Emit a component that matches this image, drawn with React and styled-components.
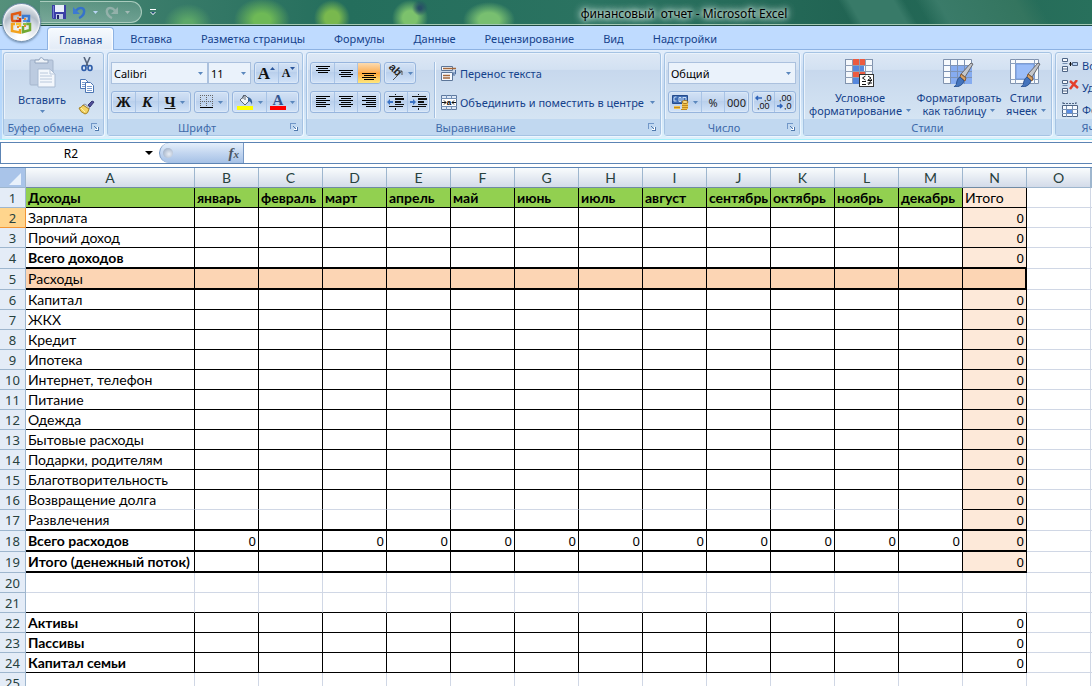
import styled, { createGlobalStyle, css } from 'styled-components'

const colors = {
  text: '#15428b',
  label: '#3e6aaa',
  line: '#8db2e3',
  caret: '#5a87bd',
  grid: '#d0d7e5',
  green: '#92d050',
  peach: '#fcd5b4',
  lightPeach: '#fde9d9',
}

const uiFont = `'Noto Sans', 'Open Sans', sans-serif`
const cellFont = `Lato, 'Open Sans', sans-serif`

const GlobalStyle = createGlobalStyle`
  * {
    box-sizing: border-box;
  }
  body {
    margin: 0;
    background: #fff;
    font-family: ${uiFont};
    font-size: 11px;
    color: ${colors.text};
  }
  button, input, select {
    font: inherit;
    color: inherit;
    margin: 0;
  }
  svg {
    display: block;
    flex-shrink: 0;
  }
`

const Window = styled.div`
  display: flex;
  flex-direction: column;
  height: 100vh;
  overflow: hidden;
  position: relative;
`

const TitleBar = styled.header`
  display: flex;
  height: 26px;
  flex-shrink: 0;
  border-bottom: 1px solid #1d4b42;
  box-shadow: inset 0 -1px 0 #a3c9b4;
  background:
    radial-gradient(ellipse 24px 20px at 188px 24px, #5da868 20%, transparent),
    radial-gradient(ellipse 28px 22px at 262px 20px, #6eb956 30%, transparent),
    radial-gradient(ellipse 18px 18px at 332px 18px, #79b84e 40%, transparent),
    radial-gradient(circle 8px at 420px 8px, #274f66 20%, transparent),
    radial-gradient(ellipse 18px 18px at 410px 18px, #7cc26c 40%, transparent),
    radial-gradient(ellipse 26px 18px at 489px 20px, #78bf70 40%, transparent),
    linear-gradient(60deg, transparent 77%, #387a68 78%, #387a68 82%, transparent 83%),
    linear-gradient(60deg, transparent 84%, #3a7b69 86%, #34755f 93%, transparent 95%),
    linear-gradient(90deg, #55907b 0%, #3a7c6a 14%, #246e5c 32%, #2b7361 55%, #216453 78%, #28705c 100%);
`

const QuickArea = styled.div`
  width: 276px;
  display: flex;
  align-items: center;
  gap: 8px;
  padding-left: 40px;
  padding-bottom: 1px;
`

const QuickBar = styled.div`
  display: flex;
  align-items: center;
  gap: 7px;
  height: 22px;
  width: 102px;
  padding-left: 12px;
  border: 1px solid #a9cbbd;
  border-left: 0;
  border-radius: 0 11px 11px 0;
  background: linear-gradient(#8bb3a555, #b7d3ca66);
`

const IconButton = styled.button`
  display: flex;
  align-items: center;
  justify-content: center;
  padding: 0;
  border: 0;
  background: none;
`

const Title = styled.h1`
  flex: 1;
  margin: 0;
  font-size: 12px;
  line-height: 28px;
  font-weight: 400;
  text-align: center;
  white-space: pre;
  color: #000;
  text-shadow: 0 0 4px #e4f3ec, 0 0 8px #e4f3ec, 0 0 10px #e4f3ec;
`

const OfficeButton = styled.button`
  position: absolute;
  top: 3px;
  left: 2px;
  width: 39px;
  height: 39px;
  padding: 0;
  display: flex;
  align-items: center;
  justify-content: center;
  border: 1px solid #7691ad;
  border-radius: 50%;
  background: radial-gradient(circle at 50% 90%, #fff 10%, #d9dfe6 45%, #b3bdc9 60%, #eef2f6 90%);
  box-shadow: 0 1px 2px #33557788, inset 0 0 2px 1px #fff;
`

const Tabs = styled.nav`
  display: flex;
  gap: 1px;
  height: 24px;
  flex-shrink: 0;
  padding: 1px 0 0 47px;
  background: #bfdbff;
  border-bottom: 1px solid ${colors.line};
`

const Tab = styled.button`
  height: 24px;
  padding: 0 ${(p) => (p.$active ? 11 : 14)}px;
  margin-right: ${(p) => (p.$active ? 1 : 0)}px;
  border: ${(p) => (p.$active ? `1px solid ${colors.line}` : '0')};
  border-bottom: 0;
  border-radius: 4px 4px 0 0;
  background: ${(p) => (p.$active ? 'linear-gradient(#f6fafe, #e1eaf6)' : 'none')};
  box-shadow: ${(p) => (p.$active ? 'inset 0 0 2px 1px #fff' : 'none')};
  line-height: 22px;
  white-space: nowrap;
`

const Ribbon = styled.div`
  display: flex;
  gap: 3px;
  height: 90px;
  flex-shrink: 0;
  padding: 2px 0 3px 3px;
  overflow: hidden;
  border-bottom: 1px solid #9ff0fb;
  background: linear-gradient(#e3eefb, #cfe0f5 20%, #c7dbf3 45%, #dcf0fb);
  box-shadow: inset 2px 0 0 #b7d8fb;
`

const Group = styled.section`
  display: flex;
  flex-direction: column;
  flex-shrink: 0;
  width: ${(p) => p.$width}px;
  border: 1px solid #a5c3e3;
  border-radius: 3px;
  box-shadow: 1px 1px 0 #eef6ff, inset 1px 1px 0 #eaf2fb;
  background: linear-gradient(#dde8f5, #d3e1f2 20%, #c7d8ed 21%, #d9e8f5 100%);
`

const GroupBody = styled.div`
  flex: 1;
  min-height: 0;
  display: flex;
  padding: ${(p) => p.$pad || '9px 3px 0'};
  gap: ${(p) => p.$gap || 0}px;
`

const GroupLabel = styled.div`
  position: relative;
  height: 16px;
  flex-shrink: 0;
  line-height: 17px;
  padding-right: ${(p) => (p.$launcher ? 16 : 0)}px;
  text-align: center;
  white-space: nowrap;
  color: ${colors.label};
  background: #c1d8f0;
`

const Launcher = styled(IconButton)`
  position: absolute;
  top: 3px;
  right: 4px;
`

const Stack = styled.div`
  display: flex;
  flex-direction: column;
  gap: ${(p) => p.$gap || 7}px;
`

const Row = styled.div`
  display: flex;
  gap: ${(p) => p.$gap ?? 3}px;
`

const ButtonSet = styled.div`
  display: flex;
  height: 22px;
  border: 1px solid #97b5dd;
  border-radius: 3px;
  overflow: hidden;
  background: linear-gradient(#d3e2f5, #c1d5ef 45%, #b9cfec 46%, #d2e3f8);
  box-shadow: inset 0 0 0 1px #dbe8f7;
`

const Tool = styled.button`
  display: flex;
  align-items: center;
  justify-content: center;
  gap: ${(p) => p.$gap ?? 4}px;
  width: ${(p) => p.$width || 23}px;
  padding: 0;
  border: 0;
  border-left: 1px solid #a9c4e6;
  background: none;
  color: #111;
  white-space: nowrap;
  &:first-child {
    border-left: 0;
  }
  ${(p) =>
    p.$active &&
    css`
      background: linear-gradient(#fbdbb0, #fdb159 45%, #fda63c 50%, #ffe87c);
    `}
`

const Glyph = styled.span`
  font-family: 'Liberation Serif', serif;
  font-size: ${(p) => p.$size || 15}px;
  font-weight: 700;
  line-height: 15px;
  font-style: ${(p) => (p.$italic ? 'italic' : 'normal')};
  text-decoration: ${(p) => (p.$underline ? 'underline' : 'none')};
`

const SizeMark = styled.span`
  align-self: flex-start;
  padding-top: 4px;
`

const Digits = styled.span`
  font-size: 11px;
  color: #222;
`

const SelectBox = styled.div`
  display: flex;
  align-items: center;
  width: ${(p) => p.$width}px;
  height: 22px;
  padding-right: 4px;
  border: 1px solid #abc1de;
  background: #eaf2fb;
`

const Select = styled.select`
  flex: 1;
  min-width: 0;
  height: 20px;
  padding: 0 0 0 2px;
  border: 0;
  appearance: none;
  background: none;
  color: #000;
`

const BigButton = styled.button`
  display: flex;
  flex-direction: column;
  align-items: center;
  width: ${(p) => p.$width}px;
  padding: 0;
  border: 0;
  background: none;
  line-height: 13px;
  white-space: nowrap;
  > svg:first-child {
    margin-bottom: 4px;
  }
`

const BigCaption = styled.span`
  display: flex;
  align-items: center;
  gap: 4px;
`

const CaptionCaret = styled.span`
  padding-top: 4px;
`

const TextButton = styled.button`
  display: flex;
  align-items: center;
  gap: 3px;
  height: ${(p) => p.$height || 22}px;
  padding: 0;
  border: 0;
  background: none;
  white-space: nowrap;
`

const ButtonText = styled.span`
  padding-right: 3px;
`

const Divider = styled.div`
  width: 2px;
  height: 56px;
  margin: 0 5px 0 4px;
  background: #a3bfe0;
  border-right: 1px solid #f1f7fd;
`

const FormulaBar = styled.div`
  display: flex;
  flex-shrink: 0;
  height: 22px;
  margin-top: 2px;
  border-top: 1px solid #5c84b4;
  border-bottom: 1px solid #5c84b4;
  background: #fff;
`

const NameBox = styled.div`
  display: flex;
  align-items: center;
  width: 159px;
  padding-right: 6px;
  border-left: 1px solid #5c84b4;
`

const NameInput = styled.input`
  flex: 1;
  min-width: 0;
  padding: 0 4px 0 0;
  border: 0;
  outline: 0;
  font-size: 12px;
  text-align: center;
  color: #000;
`

const FunctionBox = styled.div`
  display: flex;
  align-items: center;
  justify-content: space-between;
  width: 85px;
  padding: 0 4px 0 3px;
  border: 1px solid #7798c4;
  border-width: 0 1px;
  border-radius: 10px 0 0 10px;
  background: linear-gradient(#e4effb, #c3d6f0 50%, #a5c1e6);
`

const Knob = styled.span`
  width: 10px;
  height: 10px;
  border-radius: 50%;
  background: radial-gradient(circle at 60% 60%, #e9eef5, #8fa2bd);
`

const Fx = styled.span`
  font: italic bold 15px 'Liberation Serif', serif;
  color: #4c5663;
  small {
    font-size: 11px;
  }
`

const FormulaInput = styled.input`
  flex: 1;
  border: 0;
  outline: 0;
`

const SheetWrap = styled.main`
  flex: 1;
  min-height: 0;
  overflow: hidden;
  margin-top: 3px;
  border-top: 1px solid #5c84b4;
  background: #fff;
`

const Sheet = styled.table`
  width: 100%;
  table-layout: fixed;
  border-collapse: separate;
  border-spacing: 0;
  font-family: ${cellFont};
  font-size: 14px;
  line-height: 16px;
  color: #000;
`

const ColHead = styled.th`
  height: 20px;
  padding: 0;
  font-weight: 400;
  color: #27413e;
  border-right: 1px solid #9eb6ce;
  border-bottom: 1px solid ${(p) => (p.$overTable ? '#6f8aa3' : '#9eb6ce')};
  background: linear-gradient(#f9fcfd, #d3dbe9);
`

const Corner = styled.th`
  padding: 0;
  border-right: 1px solid #9eb6ce;
  border-bottom: 1px solid #9eb6ce;
  background: #a9c4e9;
  svg {
    margin: 3px 3px 0 auto;
  }
`

const RowHead = styled.th`
  height: ${(p) => p.$height}px;
  padding: 0;
  font-family: ${uiFont};
  font-size: 13px;
  font-weight: 400;
  color: #27413e;
  border-right: 1px solid ${(p) => (p.$active ? '#f29536' : '#9eb6ce')};
  border-bottom: 1px solid ${(p) => (p.$active ? '#f29536' : '#9eb6ce')};
  background: ${(p) => (p.$active ? '#ffd58d' : '#e4ecf7')};
`

const Cell = styled.td`
  padding: 0 ${(p) => (p.$number ? 2 : 0)}px 0 2px;
  overflow: hidden;
  white-space: nowrap;
  text-align: ${(p) => (p.$number ? 'right' : 'left')};
  font-weight: ${(p) => (p.$bold ? 700 : 400)};
  background: ${(p) => p.$fill || '#fff'};
  border-right: ${(p) => p.$right}px solid ${(p) => (p.$dark ? '#000' : colors.grid)};
  border-bottom: ${(p) => p.$bottom}px solid ${(p) => (p.$darkBottom ? '#000' : colors.grid)};
  ${(p) =>
    p.$number &&
    css`
      font-family: ${uiFont};
      font-size: 13px;
    `}
`

const Caret = ({ color = colors.caret, size = 5 }) => (
  <svg width={size} height={size === 5 ? 3 : 4} viewBox="0 0 5 3" preserveAspectRatio="none" aria-hidden="true">
    <path d="M0 0h5L2.5 3z" fill={color} />
  </svg>
)

const Lines = ({ rows, top = 0, align = 'left' }) => (
  <svg width="16" height="16" shapeRendering="crispEdges" aria-hidden="true">
    {rows.map((w, i) => {
      const x = align === 'left' ? 1 : align === 'right' ? 15 - w : 8 - w / 2
      return <rect key={i} x={x} y={top + i * 2} width={w} height="1" fill="#000" />
    })}
  </svg>
)

const IndentIcon = ({ flip }) => (
  <svg width="18" height="16" shapeRendering="crispEdges" aria-hidden="true">
    <path d="M2 2h14v1H2zM8 4h9v2H8zM8 7h6v2H8zM8 10h9v1H8zM2 12h14v1H2zM8 14h1v2H8zM8 0h1v1H8z" fill="#111" />
    <path
      d={flip ? 'M6 8L3 5v2H0v2h3v2z' : 'M0 8l3-3v2h3v2H3v2z'}
      fill="#3a72c4"
      shapeRendering="auto"
    />
  </svg>
)

const LauncherIcon = () => (
  <svg width="9" height="9" fill="none" shapeRendering="crispEdges" aria-hidden="true">
    <path d="M1.5 7V1.5H7" stroke="#7197c8" />
    <path d="M4.5 8.5h4v-4M4 4l3 3" stroke="#4f79ad" />
    <path d="M5 8V7h2V5h1v3z" fill="#fff" />
  </svg>
)

const OfficeLogo = () => (
  <svg width="25" height="25" viewBox="0 0 25 25" fill="none" strokeWidth="2.5" aria-hidden="true">
    <path d="M7 11H3.500Q3 11 3 8V4.500L11 2.500V6" stroke="#df5a12" />
    <path d="M7 11h4V8" stroke="#c83018" />
    <path d="M14 9V6h6v5h-3" stroke="#3a7ad0" />
    <path d="M6 14H3v7l8 1.500V19" stroke="#f3a21d" />
    <path d="M7 14h4v3" stroke="#fac22c" />
    <path d="M14 16v6l7-2v-6h-4" stroke="#72a932" />
    <path d="M8 8h2M15 9h2M8 17h2M15 16h2" stroke="#ea8c31" strokeWidth="2" />
    <path d="M14 11h4" stroke="#5b96df" strokeWidth="2" />
    <path d="M14 14h4" stroke="#8fbe4b" strokeWidth="2" />
  </svg>
)

const SaveIcon = () => (
  <svg width="14" height="14" aria-hidden="true">
    <path d="M0 0h14v14H1L0 13z" fill="#3a3fa6" />
    <path d="M3 0h9v7H3z" fill="#e9f0fa" />
    <path d="M4 9h7v5H4z" fill="#c2cde6" />
    <path d="M5 10h2v4H5z" fill="#23276f" />
    <path d="M1 1h1v12H1z" fill="#7279d0" />
  </svg>
)

const UndoIcon = ({ faded }) => (
  <svg width="13" height="13" viewBox="0 0 13 13" opacity={faded ? 0.55 : 1} aria-hidden="true">
    <g transform={faded ? 'translate(13 0) scale(-1 1)' : undefined}>
      <path
        d="M3 4.500C7 0 12 2 11 6.500Q10.500 10 6 12"
        fill="none"
        stroke={faded ? '#b9c4c4' : '#3672ca'}
        strokeWidth="2.400"
      />
      <path d="M0 1v7h7z" fill={faded ? '#b9c4c4' : '#3c7ad2'} />
    </g>
  </svg>
)

const PasteIcon = () => (
  <svg width="28" height="32" aria-hidden="true">
    <rect x="2" y="3" width="23" height="25" rx="1" fill="#bccbe0" stroke="#a5b5cc" />
    <path d="M7 6V3h4q2-5 5 0h4v3z" fill="#edf2f8" stroke="#94a6bf" />
    <path d="M10 12h12l5 5v13H10z" fill="#f3f7fc" stroke="#a9bbd3" />
    <path d="M22 12v5h5M12 16h8M12 19h12M12 22h12M12 25h12" fill="none" stroke="#b9c8dc" />
  </svg>
)

const CutIcon = () => (
  <svg width="14" height="15" fill="none" aria-hidden="true">
    <path d="M4 0l4 9M10 0L6 9" stroke="#56657d" strokeWidth="1.600" />
    <ellipse cx="4" cy="11" rx="2" ry="2.500" stroke="#2d5ca8" strokeWidth="1.600" />
    <ellipse cx="10" cy="11" rx="2" ry="2.500" stroke="#2d5ca8" strokeWidth="1.600" />
  </svg>
)

const CopyIcon = () => (
  <svg width="16" height="14" fill="#fff" stroke="#4b75b3" aria-hidden="true">
    <path d="M1.500.5h5l3 3v6h-8z" />
    <path d="M6.500 3.500h5l3 3v7h-8z" />
    <path d="M3 3.500h3M3 5.500h3M3 7.500h3M8 7.500h5M8 9.500h5M8 11.500h5" stroke="#7b9dd0" />
  </svg>
)

const BrushIcon = () => (
  <svg width="17" height="15" aria-hidden="true">
    <path d="M10 5l4-4 2 1-4 5z" fill="#50509a" stroke="#383775" />
    <path d="M7 4l5 4-2 1-5-4z" fill="#d5dbe5" stroke="#8b92a2" />
    <path d="M5 5l6 4q-1 5-4 5Q2 12 1 8q2 0 4-3z" fill="#f3d465" stroke="#a88325" />
    <path d="M3 8l4 4" stroke="#fff0a8" />
  </svg>
)

const dots = [0, 2, 4, 6, 8, 10, 12]

const BorderIcon = () => (
  <svg width="13" height="14" shapeRendering="crispEdges" fill="#666" aria-hidden="true">
    {dots.map((d) => (
      <g key={d}>
        <rect x={d} y="0" width="1" height="1" />
        <rect x={d} y="6" width="1" height="1" />
        {d < 12 && (
          <>
            <rect x="0" y={d} width="1" height="1" />
            <rect x="6" y={d} width="1" height="1" />
            <rect x="12" y={d} width="1" height="1" />
          </>
        )}
      </g>
    ))}
    <rect y="12" width="13" height="1" fill="#000" />
  </svg>
)

const FillIcon = () => (
  <svg width="17" height="16" aria-hidden="true">
    <path d="M3 6l5-5 5 5-5 5z" fill="#eef2f7" stroke="#5d6674" />
    <path d="M6 5V2q1-2 2 0v4" fill="none" stroke="#5d6674" />
    <path d="M11 3q5 1 4 8-1-4-4-4z" fill="#38659c" />
    <path d="M0 12h16v4H0z" fill="#ff0" />
  </svg>
)

const FontColorIcon = () => (
  <svg width="16" height="16" aria-hidden="true">
    <text x="8" y="11" textAnchor="middle" fontFamily="Liberation Serif" fontSize="15" fontWeight="700" fill="#34558f">
      A
    </text>
    <path d="M0 12h16v4H0z" fill="#f00" />
  </svg>
)

const OrientationIcon = () => (
  <svg width="16" height="16" aria-hidden="true">
    <text x="-1" y="8" transform="rotate(45 6 7)" fontFamily="Liberation Sans" fontSize="11" fontWeight="700" fill="#222">
      ab
    </text>
    <path d="M5 15l9-9M10 6h4v4" fill="none" stroke="#555" />
  </svg>
)

const WrapIcon = () => (
  <svg width="16" height="15" fill="none" aria-hidden="true">
    <path d="M.5.5h11v4H.5zM.5 6.500h11v8H.5z" fill="#f6f9fd" stroke="#5c7698" />
    <path d="M2 2.500h13M2 9.500h7M2 12h7" stroke="#a3673b" strokeWidth="1.400" />
    <path d="M14.500 4v4H12M13.500 6l-2 2 2 2" stroke="#4f6f9e" />
  </svg>
)

const MergeIcon = () => (
  <svg width="16" height="15" aria-hidden="true">
    <path d="M.5.5h15v14H.5z" fill="#dce8f7" stroke="#5e799e" />
    <path d="M5.500 0v4M10.500 0v4M5.500 11v4M10.500 11v4M0 3.500h16M0 11.500h16" stroke="#7490b5" />
    <path d="M1 4h14v7H1z" fill="#fff" />
    <path d="M1 7.500h4M3 5.500l2 2-2 2M15 7.500h-4M13 5.500l-2 2 2 2" fill="none" stroke="#111" />
    <text x="8" y="10" textAnchor="middle" fontFamily="Liberation Sans" fontSize="8" fontWeight="700" fill="#000">
      a
    </text>
  </svg>
)

const CurrencyIcon = () => (
  <svg width="17" height="16" aria-hidden="true">
    <path d="M.5 1.500h15v8H.5z" fill="#3d6cb4" stroke="#244b8d" />
    <path d="M2 4q0-1.500 2.500-1M2 4v3h2.500M7 3.500h2v4H7zM11 3v5M11 3.500h3v3h-3" fill="none" stroke="#c8ddf7" />
    <path d="M10 8h6v7h-6zM2 12h6v3H2z" fill="#f3c24a" />
    <ellipse cx="13" cy="8" rx="3" ry="1.500" fill="#ffe591" stroke="#a2731c" />
    <path d="M10 11.500h6M10 13.500h6M2 13.500h6M9 15.500h6" stroke="#c08a22" />
  </svg>
)

const DecimalIcon = ({ less }) => (
  <svg width="17" height="16" aria-hidden="true">
    <g fontFamily="Liberation Sans" fontSize="9" fill="#111">
      <text x={less ? 2 : 9} y="7">{less ? ',00' : ',0'}</text>
      <text x={less ? 7 : 2} y="15">{less ? ',0' : ',00'}</text>
    </g>
    <path
      d={less ? 'M0 12h5M3 10l2 2-2 2' : 'M7 4H1M3 2L1 4l2 2'}
      fill="none"
      stroke="#2e63b8"
      strokeWidth="1.500"
    />
  </svg>
)

const ConditionalIcon = () => (
  <svg width="30" height="28" shapeRendering="crispEdges" aria-hidden="true">
    <path d="M.5.5h27v24H.5z" fill="#f5f8fc" stroke="#8193ae" />
    <path d="M8 0h7v7H8zM21 0h-6v7h6z" fill="#ec5a40" />
    <path d="M8 7h11v5H8zM8 19h7v6H8z" fill="#5587dd" />
    <path d="M8 13h13v5H8z" fill="#ec5a40" />
    <path d="M0 6.500h28M0 12.500h28M0 18.500h28M7.500 0v25M14.500 0v25M20.500 0v25" stroke="#8e9db5" />
    <path d="M14.500 15.500h14v12h-14z" fill="#fff" stroke="#333" />
    <g fill="none" stroke="#111" shapeRendering="auto">
      <path d="M20.500 17l-3 2 3 2M17 22.500h4M17 25.500h4M23 17l3 2-3 2M22.500 21.500h4.500M22.500 24h4.500M26.500 20l-3 6" />
    </g>
  </svg>
)

const Paintbrush = () => (
  <g>
    <path d="M28 4l2 1-8 13-4-3z" fill="#c4c6ca" stroke="#67686c" />
    <path d="M18 15l5 4-1 3-5-4z" fill="#d6a267" stroke="#87592e" />
    <path d="M17 18l4 4q-2 6-10 6 3-2 3-6 1-3 3-4z" fill="#4474bd" stroke="#2d5491" />
  </g>
)

const FormatTableIcon = () => (
  <svg width="32" height="28" aria-hidden="true">
    <path d="M.5.500h28v24H.5z" fill="#f7fafd" stroke="#8193ae" />
    <path d="M8 7h21v18H8z" fill="#86acf0" />
    <path d="M0 6.500h29M0 12.500h29M0 18.500h29M7.500 0v25M14.500 0v25M21.500 0v25" stroke="#7d93b5" />
    <Paintbrush />
  </svg>
)

const CellStyleIcon = () => (
  <svg width="32" height="28" aria-hidden="true">
    <path d="M.5.500h28v24H.5z" fill="#f7fafd" stroke="#8193ae" />
    <path d="M0 4.500h29M0 20.500h29M5.500 0v25M24.500 0v25" stroke="#8ba0bf" />
    <path d="M6 5h18v15H6z" fill="#9bbdf8" stroke="#7399dc" />
    <Paintbrush />
  </svg>
)

const CellsIcon = ({ kind }) => (
  <svg width="17" height="15" aria-hidden="true">
    {kind === 'format' ? (
      <g stroke="#4e6484">
        <path d="M1 1.500h13M1 0v3M14 0v3" strokeDasharray="2 1" />
        <path d="M.5 3.500h15v11H.5z" fill="#f8fbff" />
        <path d="M4.500 4v11M10.500 4v11M0 7.500h16M0 11.500h16" stroke="#7690b4" />
        <path d="M5 8h5v3H5z" fill="#5c90e8" stroke="none" />
      </g>
    ) : (
      <g>
        <path d="M.5.500h5v3h-5zM.5 8.500h5v5h-5zM.5 11h5" fill="#f8fbff" stroke="#4e6484" />
        <path d="M.5 5.500h5" stroke="#7690b4" />
        {kind === 'insert' ? (
          <g>
            <path d="M10.500 4.500h5v3h-5z" fill="#b9d3f5" stroke="#4e6484" />
            <path d="M7 6h3M8.500 4v4" stroke="#111" />
          </g>
        ) : (
          <path d="M8 1l8 7M15 0L8 9" stroke="#e33f2c" strokeWidth="2.400" />
        )}
      </g>
    )}
  </svg>
)

const tabs = ['Главная', 'Вставка', 'Разметка страницы', 'Формулы', 'Данные', 'Рецензирование', 'Вид', 'Надстройки']

const months = [
  'январь',
  'февраль',
  'март',
  'апрель',
  'май',
  'июнь',
  'июль',
  'август',
  'сентябрь',
  'октябрь',
  'ноябрь',
  'декабрь',
]

const letters = 'ABCDEFGHIJKLMNO'.split('')

const rows = [
  { name: 'Доходы', bold: true, header: true },
  { name: 'Зарплата', total: '0' },
  { name: 'Прочий доход', total: '0' },
  { name: 'Всего доходов', bold: true, total: '0', thick: true },
  { name: 'Расходы', fill: colors.peach, thick: true },
  { name: 'Капитал', total: '0' },
  { name: 'ЖКХ', total: '0' },
  { name: 'Кредит', total: '0' },
  { name: 'Ипотека', total: '0' },
  { name: 'Интернет, телефон', total: '0' },
  { name: 'Питание', total: '0' },
  { name: 'Одежда', total: '0' },
  { name: 'Бытовые расходы', total: '0' },
  { name: 'Подарки, родителям', total: '0' },
  { name: 'Благотворительность', total: '0' },
  { name: 'Возвращение долга', total: '0', softBottom: true },
  { name: 'Развлечения', total: '0', thick: true },
  { name: 'Всего расходов', bold: true, total: '0', sums: true, thick: true },
  { name: 'Итого (денежный поток)', bold: true, total: '0', thick: true },
  { empty: true },
  { empty: true, darkBottom: true },
  { name: 'Активы', bold: true, total: '0', plain: true },
  { name: 'Пассивы', bold: true, total: '0', plain: true },
  { name: 'Капитал семьи', bold: true, total: '0', plain: true },
  { empty: true },
]

function SheetRow({ row, index }) {
  const monthFill = row.header ? colors.green : row.fill
  const totalFill = row.fill || (row.empty || row.plain ? undefined : colors.lightPeach)
  const border = {
    $dark: !row.empty,
    $darkBottom: row.darkBottom || (!row.empty && !row.softBottom),
    $right: 1,
    $bottom: row.thick ? 2 : 1,
  }
  const monthValue = (month, i) => {
    if (row.header) return month
    // February has no formula in the sums row
    return row.sums && i !== 1 ? '0' : ''
  }

  return (
    <tr>
      <RowHead scope="row" $height={row.thick ? 21 : 20} $active={index === 1}>
        {index + 1}
      </RowHead>
      <Cell {...border} $bold={row.bold} $fill={monthFill}>
        {row.name}
      </Cell>
      {months.map((month, i) => (
        <Cell key={month} {...border} $bold={row.header} $number={!row.header} $fill={monthFill}>
          {monthValue(month, i)}
        </Cell>
      ))}
      <Cell
        {...border}
        $right={row.fill ? 2 : 1}
        $darkBottom={row.darkBottom || !row.empty}
        $number={!row.header}
        $fill={totalFill}
      >
        {row.header ? 'Итого' : row.total}
      </Cell>
      <Cell $right={1} $bottom={1} />
      <Cell $right={0} $bottom={1} />
    </tr>
  )
}

function RibbonGroup({ label, width, launcher, pad, gap, children }) {
  return (
    <Group $width={width} aria-label={label}>
      <GroupBody $pad={pad} $gap={gap}>
        {children}
      </GroupBody>
      <GroupLabel $launcher={launcher}>
        {label}
        {launcher && (
          <Launcher aria-label={`${label}: параметры`}>
            <LauncherIcon />
          </Launcher>
        )}
      </GroupLabel>
    </Group>
  )
}

function Combo({ label, value, width }) {
  return (
    <SelectBox $width={width}>
      <Select aria-label={label} defaultValue={value}>
        <option>{value}</option>
      </Select>
      <Caret />
    </SelectBox>
  )
}

function App() {
  return (
    <Window>
      <GlobalStyle />
      <TitleBar>
        <QuickArea>
          <QuickBar>
            <IconButton aria-label="Сохранить">
              <SaveIcon />
            </IconButton>
            <IconButton aria-label="Отменить">
              <UndoIcon />
            </IconButton>
            <Caret color="#b8d4f2" />
            <IconButton aria-label="Вернуть">
              <UndoIcon faded />
            </IconButton>
            <Caret color="#a3b9b5" />
          </QuickBar>
          <IconButton aria-label="Настройка панели быстрого доступа">
            <svg width="6" height="7" aria-hidden="true">
              <path d="M0 0h6v1H0zM0 3h6L3 6z" fill="#fff" />
              <path d="M1 3h4L3 5z" fill="#204a7a" />
            </svg>
          </IconButton>
        </QuickArea>
        <Title>{'финансовый  отчет - Microsoft Excel'}</Title>
      </TitleBar>
      <Tabs>
        {tabs.map((tab, i) => (
          <Tab key={tab} $active={i === 0}>
            {tab}
          </Tab>
        ))}
      </Tabs>
      <OfficeButton aria-label="Кнопка Office">
        <OfficeLogo />
      </OfficeButton>

      <Ribbon>
        <RibbonGroup label="Буфер обмена" width={101} launcher pad="4px 3px 0" gap={1}>
          <BigButton $width={70}>
            <PasteIcon />
            Вставить
            <CaptionCaret>
              <Caret />
            </CaptionCaret>
          </BigButton>
          <Stack $gap={7}>
            <IconButton aria-label="Вырезать">
              <CutIcon />
            </IconButton>
            <IconButton aria-label="Копировать">
              <CopyIcon />
            </IconButton>
            <IconButton aria-label="Формат по образцу">
              <BrushIcon />
            </IconButton>
          </Stack>
        </RibbonGroup>

        <RibbonGroup label="Шрифт" width={196} launcher>
          <Stack>
            <Row>
              <Row $gap={0}>
                <Combo label="Шрифт" value="Calibri" width={97} />
                <Combo label="Размер шрифта" value="11" width={43} />
              </Row>
              <ButtonSet>
                <Tool aria-label="Увеличить размер" $gap={0}>
                  <Glyph $size={17}>A</Glyph>
                  <SizeMark>
                    <svg width="5" height="3" aria-hidden="true">
                      <path d="M0 3h5L2.500 0z" fill="#2b569c" />
                    </svg>
                  </SizeMark>
                </Tool>
                <Tool aria-label="Уменьшить размер" $width={20} $gap={0}>
                  <Glyph $size={12}>A</Glyph>
                  <SizeMark>
                    <Caret color="#2b569c" />
                  </SizeMark>
                </Tool>
              </ButtonSet>
            </Row>
            <Row>
              <ButtonSet>
                <Tool>
                  <Glyph>Ж</Glyph>
                </Tool>
                <Tool>
                  <Glyph $italic>К</Glyph>
                </Tool>
                <Tool $width={32}>
                  <Glyph $underline>Ч</Glyph>
                  <Caret />
                </Tool>
              </ButtonSet>
              <ButtonSet>
                <Tool aria-label="Границы" $width={33} $gap={5}>
                  <BorderIcon />
                  <Caret />
                </Tool>
              </ButtonSet>
              <ButtonSet>
                <Tool aria-label="Цвет заливки" $width={33}>
                  <FillIcon />
                  <Caret />
                </Tool>
                <Tool aria-label="Цвет текста" $width={32}>
                  <FontColorIcon />
                  <Caret />
                </Tool>
              </ButtonSet>
            </Row>
          </Stack>
        </RibbonGroup>

        <RibbonGroup label="Выравнивание" width={355} launcher>
          <Stack>
            <Row>
              <ButtonSet>
                <Tool aria-label="По верхнему краю">
                  <Lines rows={[14, 10, 14, 10]} top={1} align="center" />
                </Tool>
                <Tool aria-label="По середине">
                  <Lines rows={[14, 10, 14, 10]} top={5} align="center" />
                </Tool>
                <Tool aria-label="По нижнему краю" $active>
                  <Lines rows={[14, 10, 14, 10]} top={8} align="center" />
                </Tool>
              </ButtonSet>
              <ButtonSet>
                <Tool aria-label="Ориентация" $width={30}>
                  <OrientationIcon />
                  <Caret />
                </Tool>
              </ButtonSet>
            </Row>
            <Row>
              <ButtonSet>
                <Tool aria-label="По левому краю">
                  <Lines rows={[14, 10, 14, 10, 14, 10]} top={2} />
                </Tool>
                <Tool aria-label="По центру">
                  <Lines rows={[14, 10, 14, 10, 14, 10]} top={2} align="center" />
                </Tool>
                <Tool aria-label="По правому краю">
                  <Lines rows={[14, 10, 14, 10, 14, 10]} top={2} align="right" />
                </Tool>
              </ButtonSet>
              <ButtonSet>
                <Tool aria-label="Уменьшить отступ" $width={22}>
                  <IndentIcon />
                </Tool>
                <Tool aria-label="Увеличить отступ" $width={22}>
                  <IndentIcon flip />
                </Tool>
              </ButtonSet>
            </Row>
          </Stack>
          <Divider />
          <Stack>
            <TextButton>
              <WrapIcon />
              Перенос текста
            </TextButton>
            <TextButton>
              <MergeIcon />
              <ButtonText>Объединить и поместить в центре</ButtonText>
              <Caret />
            </TextButton>
          </Stack>
        </RibbonGroup>

        <RibbonGroup label="Число" width={136} launcher>
          <Stack>
            <Combo label="Числовой формат" value="Общий" width={128} />
            <Row>
              <ButtonSet>
                <Tool aria-label="Финансовый формат" $width={32}>
                  <CurrencyIcon />
                  <Caret />
                </Tool>
                <Tool>
                  <Digits>%</Digits>
                </Tool>
                <Tool $width={24}>
                  <Digits>000</Digits>
                </Tool>
              </ButtonSet>
              <ButtonSet>
                <Tool aria-label="Увеличить разрядность" $width={21}>
                  <DecimalIcon />
                </Tool>
                <Tool aria-label="Уменьшить разрядность" $width={21}>
                  <DecimalIcon less />
                </Tool>
              </ButtonSet>
            </Row>
          </Stack>
        </RibbonGroup>

        <RibbonGroup label="Стили" width={249} pad="6px 3px 0" gap={2}>
          <BigButton $width={106}>
            <ConditionalIcon />
            Условное
            <BigCaption>
              форматирование <Caret />
            </BigCaption>
          </BigButton>
          <BigButton $width={88}>
            <FormatTableIcon />
            Форматировать
            <BigCaption>
              как таблицу <Caret />
            </BigCaption>
          </BigButton>
          <BigButton $width={42}>
            <CellStyleIcon />
            Стили
            <BigCaption>
              ячеек <Caret />
            </BigCaption>
          </BigButton>
        </RibbonGroup>

        <RibbonGroup label="Ячейки" width={92} pad="2px 6px 0">
          <Stack $gap={2}>
            <TextButton $height={20}>
              <CellsIcon kind="insert" />
              Вставить
            </TextButton>
            <TextButton $height={20}>
              <CellsIcon kind="delete" />
              Удалить
            </TextButton>
            <TextButton $height={20}>
              <CellsIcon kind="format" />
              Формат
            </TextButton>
          </Stack>
        </RibbonGroup>
      </Ribbon>

      <FormulaBar>
        <NameBox>
          <NameInput aria-label="Имя ячейки" defaultValue="R2" />
          <Caret color="#000" size={8} />
        </NameBox>
        <FunctionBox>
          <Knob />
          <Fx>
            f<small>x</small>
          </Fx>
        </FunctionBox>
        <FormulaInput aria-label="Строка формул" />
      </FormulaBar>

      <SheetWrap>
        <Sheet>
          <colgroup>
            <col width="26" />
            <col width="169" />
            {letters.slice(1).map((letter) => (
              <col key={letter} width="64" />
            ))}
            <col />
          </colgroup>
          <thead>
            <tr>
              <Corner aria-label="Выделить всё">
                <svg width="14" height="13" aria-hidden="true">
                  <path d="M13 0v12H1z" fill="#e8f1fb" />
                </svg>
              </Corner>
              {letters.map((letter) => (
                <ColHead key={letter} scope="col" $overTable={letter !== 'O'}>
                  {letter}
                </ColHead>
              ))}
              <ColHead />
            </tr>
          </thead>
          <tbody>
            {rows.map((row, index) => (
              <SheetRow key={index} row={row} index={index} />
            ))}
          </tbody>
        </Sheet>
      </SheetWrap>
    </Window>
  )
}

export default App
